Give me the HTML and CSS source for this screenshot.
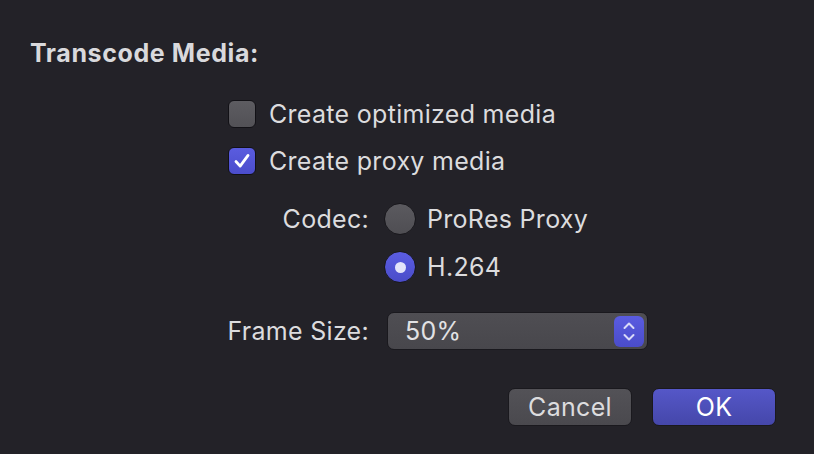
FILE: index.html
```html
<!DOCTYPE html>
<html>
<head>
<meta charset="utf-8">
<link rel="stylesheet" href="styles.css">
</head>
<body>
<div class="dialog">
  <div class="title">Transcode Media:</div>
  <div class="checks">
    <div class="check-row">
      <span class="checkbox"></span>
      <span class="label">Create optimized media</span>
    </div>
    <div class="check-row">
      <span class="checkbox checked">
        <svg viewBox="0 0 28 28" width="28" height="28"><path d="M7.5 14.5 L12 19.5 L20.5 8" fill="none" stroke="#ffffff" stroke-width="3" stroke-linecap="round" stroke-linejoin="round"/></svg>
      </span>
      <span class="label">Create proxy media</span>
    </div>
  </div>
  <div class="form">
    <div class="form-label">Codec:</div>
    <div class="radio-row"><span class="radio"></span><span class="label">ProRes Proxy</span></div>
    <div class="form-label"></div>
    <div class="radio-row second"><span class="radio on"><span class="dot"></span></span><span class="label">H.264</span></div>
    <div class="form-label size-label">Frame Size:</div>
    <div class="popup">
      <span class="popup-value">50%</span>
      <span class="stepper">
        <svg viewBox="0 0 30 31" width="30" height="31"><path d="M10.5 12 L15 7.5 L19.5 12" fill="none" stroke="#d9daf8" stroke-width="2" stroke-linecap="round" stroke-linejoin="round"/><path d="M10.5 19 L15 23.5 L19.5 19" fill="none" stroke="#d9daf8" stroke-width="2" stroke-linecap="round" stroke-linejoin="round"/></svg>
      </span>
    </div>
  </div>
  <div class="buttons">
    <button class="btn">Cancel</button>
    <button class="btn primary">OK</button>
  </div>
</div>
</body>
</html>
```
FILE: styles.css
```css
html, body {
  margin: 0;
  padding: 0;
  background: #232228;
  width: 814px;
  height: 454px;
  overflow: hidden;
}
body {
  font-family: Inter, "Liberation Sans", sans-serif;
  color: #dcdcde;
}
.dialog {
  padding: 38px 38px 0 30px;
}
.title {
  font-weight: 700;
  font-size: 25px;
  line-height: 30px;
  height: 30px;
  color: #d9d9dc;
  letter-spacing: 0.6px;
}
.checks {
  margin-top: 32px;
  padding-left: 198px;
  display: flex;
  flex-direction: column;
  gap: 19px;
}
.check-row {
  display: flex;
  align-items: center;
  height: 28px;
}
.label {
  font-size: 25px;
  line-height: 30px;
  letter-spacing: 0.3px;
  color: #dcdcde;
  white-space: nowrap;
}
.check-row .label {
  margin-left: 13px;
}
.checkbox {
  width: 28px;
  height: 28px;
  box-sizing: border-box;
  border-radius: 6px;
  background: linear-gradient(#5d5c61, #525156);
  border: 1px solid #121116;
  display: inline-flex;
  align-items: center;
  justify-content: center;
}
.checkbox.checked {
  background: linear-gradient(#5a5cdf, #4b4dcc);
}
.checkbox svg {
  display: block;
}
.form {
  margin-top: 28px;
  padding-left: 190px;
  display: grid;
  grid-template-columns: 149px 1fr;
  column-gap: 15px;
  align-items: center;
}
.form-label {
  text-align: right;
  font-size: 25px;
  line-height: 30px;
  letter-spacing: 0.3px;
  color: #dcdcde;
  white-space: nowrap;
}
.radio-row {
  display: flex;
  align-items: center;
  height: 32px;
}
.radio-row.second {
  margin-top: 16px;
}
.radio-row .label {
  margin-left: 11px;
}
.radio {
  width: 32px;
  height: 32px;
  box-sizing: border-box;
  border-radius: 50%;
  background: linear-gradient(#5b5a5f, #4f4e53);
  border: 1px solid #18171c;
  display: inline-flex;
  align-items: center;
  justify-content: center;
}
.radio.on {
  background: linear-gradient(#5b5de2, #4a4cc9);
}
.dot {
  width: 11px;
  height: 11px;
  border-radius: 50%;
  background: #e4e4fa;
}
.size-label {
  margin-top: 29px;
}
.popup {
  margin-top: 29px;
  margin-left: 3px;
  width: 261px;
  height: 38px;
  box-sizing: border-box;
  border-radius: 7px;
  background: linear-gradient(#4f4e53, #48474c);
  border: 1px solid #1a191e;
  display: flex;
  align-items: center;
  justify-content: space-between;
  padding: 0 3px 0 17px;
}
.popup-value {
  font-size: 25px;
  line-height: 30px;
  letter-spacing: 0.3px;
  color: #e2e2e4;
}
.stepper {
  width: 30px;
  height: 31px;
  border-radius: 6px;
  background: linear-gradient(#5a5ce0, #4a4cca);
  display: block;
}
.stepper svg {
  display: block;
}
.buttons {
  margin-top: 38px;
  display: flex;
  justify-content: flex-end;
  gap: 20px;
}
.btn {
  width: 124px;
  height: 38px;
  box-sizing: border-box;
  border-radius: 7px;
  border: 1px solid #1a191e;
  background: linear-gradient(#535257, #4a494e);
  color: #dcdcde;
  font-family: Inter, "Liberation Sans", sans-serif;
  font-size: 25px;
  line-height: 30px;
  letter-spacing: 0.3px;
  padding: 0;
}
.btn.primary {
  background: linear-gradient(#5557c8, #4547aa);
  color: #ffffff;
}
```
